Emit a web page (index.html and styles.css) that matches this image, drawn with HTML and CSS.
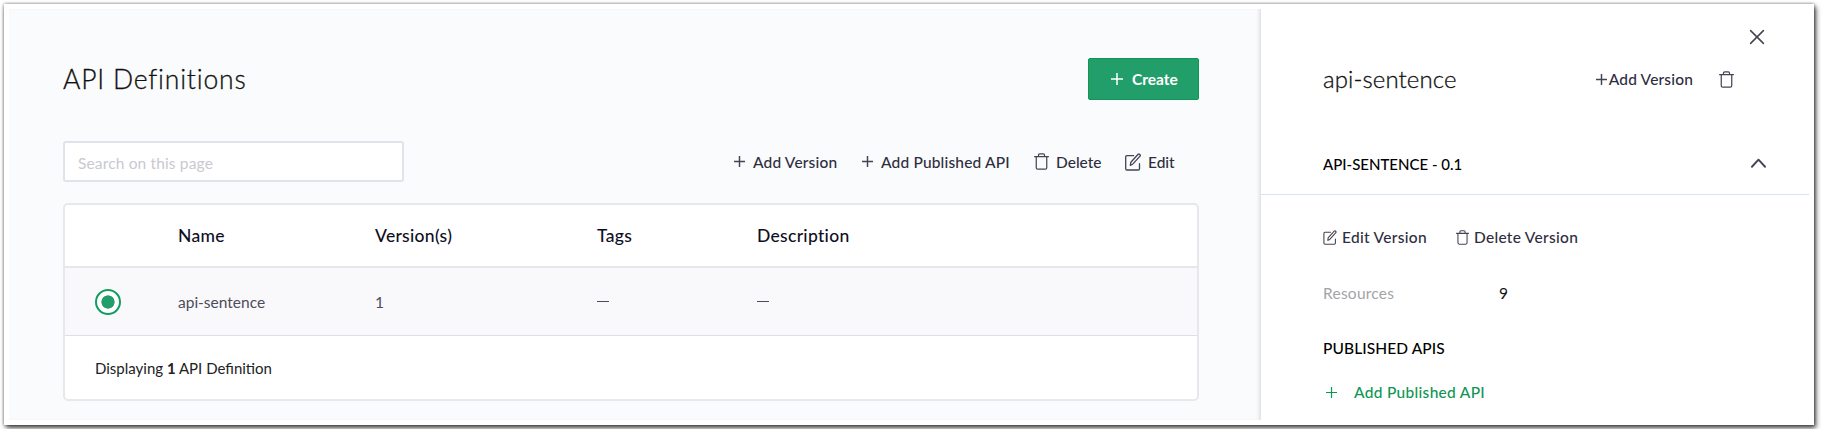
FILE: index.html
```html
<!DOCTYPE html>
<html lang="en">
<head>
<meta charset="utf-8">
<title>API Definitions</title>
<link rel="stylesheet" href="styles.css">
</head>
<body>
<svg class="defs" width="0" height="0" aria-hidden="true">
  <symbol id="plus" viewBox="0 0 12 12"><path d="M6 .3v11.4M.3 6h11.4"/></symbol>
  <symbol id="trash" viewBox="0 0 16 18"><path d="M.6 3.9h14.8M2.400 3.900v11.700c0 1 .6 1.600 1.600 1.600h8c1 0 1.600-.6 1.600-1.600V3.900M4.800 3.600V2.100c0-.8.5-1.300 1.300-1.300h3.800c.8 0 1.300.5 1.300 1.300v1.500"/></symbol>
  <symbol id="edit" viewBox="0 0 16 18"><path d="M8.600 2.700H2C1.200 2.700.7 3.200.7 4v11.700C.7 16.500 1.200 17 2 17h11.200c.8 0 1.300-.5 1.300-1.300v-5M5.300 12.400l.6-3.200 7.200-7.900c.4-.4.9-.4 1.300-.1l.6.6c.4.4.4.9 0 1.300l-7 7.800c-.8.8-1.700 1.300-2.700 1.500z"/></symbol>
</svg>
<div class="frame">
  <main class="main">
    <header class="head">
      <h1 class="title">API Definitions</h1>
      <button class="create"><svg class="ic plus-lg"><use href="#plus"/></svg><span>Create</span></button>
    </header>
    <div class="tools">
      <input class="search" placeholder="Search on this page">
      <div class="actions">
        <a class="act a1"><svg class="ic plus"><use href="#plus"/></svg><span class="wide">Add Version</span></a>
        <a class="act a2"><svg class="ic plus"><use href="#plus"/></svg><span class="wide">Add Published API</span></a>
        <a class="act a3"><svg class="ic trash"><use href="#trash"/></svg><span>Delete</span></a>
        <a class="act a4"><svg class="ic edit"><use href="#edit"/></svg><span>Edit</span></a>
      </div>
    </div>
    <section class="table">
      <div class="row thead"><span></span><span>Name</span><span>Version(s)</span><span>Tags</span><span>Description</span></div>
      <div class="row data"><span class="radio"></span><span>api-sentence</span><span>1</span><span class="dash"></span><span class="dash"></span></div>
      <div class="foot"><span>Displaying <b>1</b> API Definition</span></div>
    </section>
  </main>
  <aside class="side">
    <div class="close"><svg class="ic x" viewBox="0 0 14 14"><path d="M.6.6l12.800 12.800M13.400.6L.6 13.400"/></svg></div>
    <div class="shead">
      <h2 class="stitle">api-sentence</h2>
      <a class="sact"><svg class="ic plus"><use href="#plus"/></svg><span class="wide">Add Version</span></a>
      <svg class="ic trash"><use href="#trash"/></svg>
    </div>
    <div class="version"><span>API-SENTENCE - 0.1</span><svg class="ic chev" viewBox="0 0 16 10"><path d="M1 9l7-7.600L15 9"/></svg></div>
    <div class="vacts">
      <a class="vact"><svg class="ic edit-sm"><use href="#edit"/></svg><span class="wider">Edit Version</span></a>
      <a class="vact"><svg class="ic trash-sm"><use href="#trash"/></svg><span class="wider">Delete Version</span></a>
    </div>
    <div class="res"><span class="label">Resources</span><span>9</span></div>
    <h3 class="pub">PUBLISHED APIS</h3>
    <a class="addpub"><svg class="ic plus-g"><use href="#plus"/></svg><span class="wider">Add Published API</span></a>
  </aside>
</div>
</body>
</html>
```
FILE: styles.css
```css
* { box-sizing: border-box; }
body { margin: 0; background: #fff; overflow: hidden; font-family: Lato, "Open Sans", sans-serif; font-size: 15.5px; line-height: 20px; color: #2f2e40; white-space: nowrap; }
.defs { position: absolute; }
h1, h2, h3 { margin: 0; font-weight: 400; }
.ic { display: block; flex: none; fill: none; stroke: #444352; stroke-width: 1.3; stroke-linecap: round; stroke-linejoin: round; overflow: visible; }
.wide { letter-spacing: .17px; }
.wider { letter-spacing: .3px; }
.frame { display: flex; width: 1810px; height: 421px; margin: 4px; padding: 5px; background: #fff; box-shadow: 0 0 3px rgba(0,0,0,.5), 2px 3px 5px rgba(0,0,0,.7); }
.main { width: 1252px; height: 411px; padding: 49px 62px 0 54px; background: #fafbfd; box-shadow: inset -3px 0 3px -1px #dfe1e6; }
.head { display: flex; justify-content: space-between; height: 42px; }
.title { font-size: 26.5px; line-height: 42px; font-weight: 300; color: #111; letter-spacing: .8px; -webkit-text-stroke: .3px #111; }
.create { display: flex; align-items: center; gap: 9px; width: 111px; height: 42px; padding: 0 0 0 22px; border: 1px solid #129656; border-radius: 2px; background: #219e69; color: #fff; font: 700 15.5px/20px Lato, sans-serif; }
.plus-lg { width: 12px; height: 12px; stroke: #fff; stroke-width: 1.5; }
.tools { display: flex; justify-content: space-between; height: 41px; margin-top: 41px; }
.search { width: 341px; height: 41px; border: 2px solid #e1e2ea; border-radius: 3px; padding: 2px 13px 0; background: #fff; font: 400 15.5px Lato, sans-serif; letter-spacing: .15px; }
.search::placeholder { color: #c8c9d1; opacity: 1; }
.actions { display: flex; width: 465px; align-items: center; font-weight: 500; }
.act { display: flex; align-items: center; gap: 8px; }
.a1 { width: 128px; }
.a2 { width: 172px; }
.a3 { width: 91px; gap: 7px; }
.a4 { gap: 7px; }
.plus { width: 11px; height: 11px; stroke-width: 1.6; }
.trash { width: 15px; height: 17px; }
.edit { width: 16px; height: 18px; }
.table { width: 1136px; height: 198px; margin-top: 21px; border: 2px solid #e7e8ee; border-radius: 5px; background: #fff; overflow: hidden; }
.row { display: grid; grid-template-columns: 83px 197px 222px 160px 1fr; align-items: center; padding-left: 30px; }
.thead { height: 63px; padding-top: 1px; border-bottom: 2px solid #e6e6ee; font-size: 17.5px; font-weight: 500; color: #0f0e1f; letter-spacing: .3px; }
.data { height: 68px; border-bottom: 1px solid #dedfe8; background: #f9f9fc; font-weight: 400; color: #4d4c5b; }
.radio { width: 26px; height: 26px; border: 2.5px solid #129d5c; border-radius: 50%; background: radial-gradient(circle, #219e69 6.3px, #fff 6.9px); }
.dash { width: 12px; height: 1px; background: #4d4c5b; }
.foot { display: flex; align-items: center; height: 64px; padding-left: 30px; font-size: 15px; color: #222; }
.side { flex: 1; }
.close { display: flex; justify-content: flex-end; padding: 21px 45px 0 0; height: 49px; }
.x { width: 14px; height: 14px; stroke-width: 1.5; }
.shead { display: flex; align-items: center; height: 42px; padding: 0 75px 0 62px; font-weight: 500; }
.stitle { flex: 1; font-size: 24px; line-height: 42px; font-weight: 300; color: #111; letter-spacing: .1px; -webkit-text-stroke: .3px #111; }
.sact { display: flex; align-items: center; gap: 2px; margin-right: 26px; }
.version { display: flex; justify-content: space-between; align-items: center; height: 95px; padding: 33px 43px 0 62px; border-bottom: 1px solid #dbe3ec; font-size: 15px; font-weight: 500; color: #000; }
.chev { width: 15px; height: 10px; margin-top: -2px; stroke-width: 2; }
.vacts { display: flex; gap: 29px; align-items: center; height: 84px; padding-left: 62px; font-weight: 500; }
.vact { display: flex; align-items: center; gap: 5px; }
.edit-sm { width: 14px; height: 15px; }
.trash-sm { width: 13px; height: 15px; }
.res { display: flex; align-items: center; height: 28px; padding-left: 62px; color: #111; }
.label { width: 176px; color: #a3a3a8; letter-spacing: .25px; }
.pub { display: flex; align-items: center; height: 82px; padding-left: 62px; font-size: 15.5px; font-weight: 500; color: #000; letter-spacing: .1px; }
.addpub { display: flex; align-items: center; height: 6px; padding-left: 65px; gap: 17px; font-weight: 500; color: #0f9655; }
.plus-g { width: 11px; height: 11px; stroke: #0f9655; }
```
